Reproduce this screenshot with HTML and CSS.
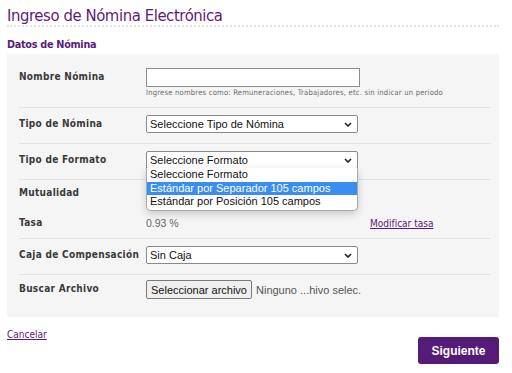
FILE: index.html
```html
<!DOCTYPE html>
<html lang="es">
<head>
<meta charset="utf-8">
<title>Ingreso de Nómina Electrónica</title>
<link rel="stylesheet" href="styles.css">
</head>
<body>
<div class="page">
  <h1 class="title">Ingreso de Nómina Electrónica</h1>
  <h2 class="subtitle">Datos de Nómina</h2>
  <div class="panel">
    <div class="row row-name">
      <div class="label">Nombre Nómina</div>
      <div class="field">
        <div class="textbox"></div>
        <div class="hint">Ingrese nombres como: Remuneraciones, Trabajadores, etc. sin indicar un periodo</div>
      </div>
    </div>
    <div class="row">
      <div class="label">Tipo de Nómina</div>
      <div class="field">
        <div class="select"><span>Seleccione Tipo de Nómina</span><svg class="chev" width="8" height="5" viewBox="0 0 8 5"><path d="M1 1l3 3 3-3" fill="none" stroke="#222" stroke-width="1.6"/></svg></div>
      </div>
    </div>
    <div class="row">
      <div class="label">Tipo de Formato</div>
      <div class="field">
        <div class="select"><span>Seleccione Formato</span><svg class="chev" width="8" height="5" viewBox="0 0 8 5"><path d="M1 1l3 3 3-3" fill="none" stroke="#222" stroke-width="1.6"/></svg></div>
        <div class="popup">
          <div class="opt">Seleccione Formato</div>
          <div class="opt opt-sel">Estándar por Separador 105 campos</div>
          <div class="opt">Estándar por Posición 105 campos</div>
        </div>
      </div>
    </div>
    <div class="row row-mut">
      <div class="label">Mutualidad</div>
      <div class="field"></div>
    </div>
    <div class="row row-tasa">
      <div class="label">Tasa</div>
      <div class="field tasa-field">
        <span class="value">0.93 %</span>
        <a class="link" href="#">Modificar tasa</a>
      </div>
    </div>
    <div class="row">
      <div class="label">Caja de Compensación</div>
      <div class="field">
        <div class="select"><span>Sin Caja</span><svg class="chev" width="8" height="5" viewBox="0 0 8 5"><path d="M1 1l3 3 3-3" fill="none" stroke="#222" stroke-width="1.6"/></svg></div>
      </div>
    </div>
    <div class="row row-last">
      <div class="label">Buscar Archivo</div>
      <div class="field file-field">
        <span class="file-btn">Seleccionar archivo</span>
        <span class="file-name">Ninguno ...hivo selec.</span>
      </div>
    </div>
  </div>
  <div class="footer">
    <a class="link cancel" href="#">Cancelar</a>
    <span class="btn-next">Siguiente</span>
  </div>
</div>
</body>
</html>
```
FILE: styles.css
```css
* { box-sizing: border-box; }
body {
  margin: 0;
  background: #fff;
  font-family: "DejaVu Sans Condensed", "DejaVu Sans", sans-serif;
  color: #333;
}
.page {
  width: 492px;
  margin-left: 7px;
}
.title {
  margin: 0;
  padding-top: 6px;
  height: 27px;
  font-size: 16.5px;
  font-weight: normal;
  letter-spacing: -0.4px;
  color: #5b1b7d;
  line-height: 20px;
  border-bottom: 2px dotted #e2e2e2;
}
.subtitle {
  margin: 0;
  padding-top: 11px;
  height: 27px;
  font-size: 10.8px;
  font-weight: bold;
  letter-spacing: -0.3px;
  color: #5b1b7d;
  line-height: 13px;
}
.panel {
  background: #f5f5f5;
  padding: 7px 8px 18px 12px;
}
.row {
  display: flex;
  align-items: flex-start;
  padding: 7px 0 10px;
  border-bottom: 1px solid #e4e4e4;
}
.row-name { padding-bottom: 10px; }
.row-last { border-bottom: none; padding: 5px 0 0; }
.row-mut { border-bottom: none; height: 29px; padding: 4px 0 0; }
.row-tasa { height: 30px; padding: 5px 0 0; }
.label {
  width: 127px;
  flex: none;
  font-size: 10px;
  font-weight: bold;
  letter-spacing: 0.3px;
  line-height: 18px;
  color: #3a3a3a;
}
.field {
  position: relative;
  flex: 1;
  min-height: 18px;
}
.textbox {
  width: 214px;
  height: 19px;
  background: #fff;
  border: 1px solid #8d8d8d;
}
.hint {
  margin-top: 1px;
  font-size: 7.6px;
  letter-spacing: 0.2px;
  line-height: 9px;
  color: #6b6b6b;
  white-space: nowrap;
}
.select {
  width: 212px;
  height: 18px;
  background: #fff;
  border: 1px solid #8a8a8a;
  border-radius: 2px;
  display: flex;
  align-items: center;
  justify-content: space-between;
  padding: 0 5px 0 3px;
  font-family: "Liberation Sans", Arial, sans-serif;
  font-size: 11px;
  color: #111;
}
.chev { display: block; }
.popup {
  position: absolute;
  left: 0;
  top: 17px;
  width: 212px;
  background: #fff;
  border: 1px solid #a8a8a8;
  border-top: none;
  border-radius: 0 0 5px 5px;
  box-shadow: 0 3px 8px rgba(0,0,0,0.18);
  padding-bottom: 1px;
  z-index: 2;
  font-family: "Liberation Sans", Arial, sans-serif;
  font-size: 11px;
  color: #111;
}
.opt {
  height: 13.6px;
  line-height: 13.6px;
  padding-left: 3px;
  white-space: nowrap;
}
.opt-sel {
  background: #3a8ef0;
  color: #fff;
}
.tasa-field {
  display: flex;
  align-items: center;
  height: 18px;
}
.value {
  font-family: "Liberation Sans", Arial, sans-serif;
  font-size: 10.5px;
  color: #666;
  width: 224px;
}
.link {
  font-size: 10px;
  color: #5b1b7d;
  text-decoration: underline;
}
.file-field {
  display: flex;
  align-items: center;
  gap: 4px;
  font-family: "Liberation Sans", Arial, sans-serif;
  font-size: 11px;
}
.file-btn {
  height: 19px;
  width: 106px;
  display: flex;
  align-items: center;
  justify-content: center;
  white-space: nowrap;
  background: #efefef;
  border: 1px solid #7a7a7a;
  border-radius: 2px;
  color: #111;
}
.file-name { color: #555; white-space: nowrap; }
.footer {
  display: flex;
  justify-content: space-between;
  align-items: flex-start;
  padding-top: 11px;
}
.cancel { line-height: 13px; }
.btn-next {
  margin-top: 9px;
  width: 81px;
  height: 27px;
  display: flex;
  align-items: center;
  justify-content: center;
  background: #551b78;
  border-radius: 3px;
  color: #fff;
  font-family: "Liberation Sans", Arial, sans-serif;
  font-weight: bold;
  font-size: 12px;
}
```
